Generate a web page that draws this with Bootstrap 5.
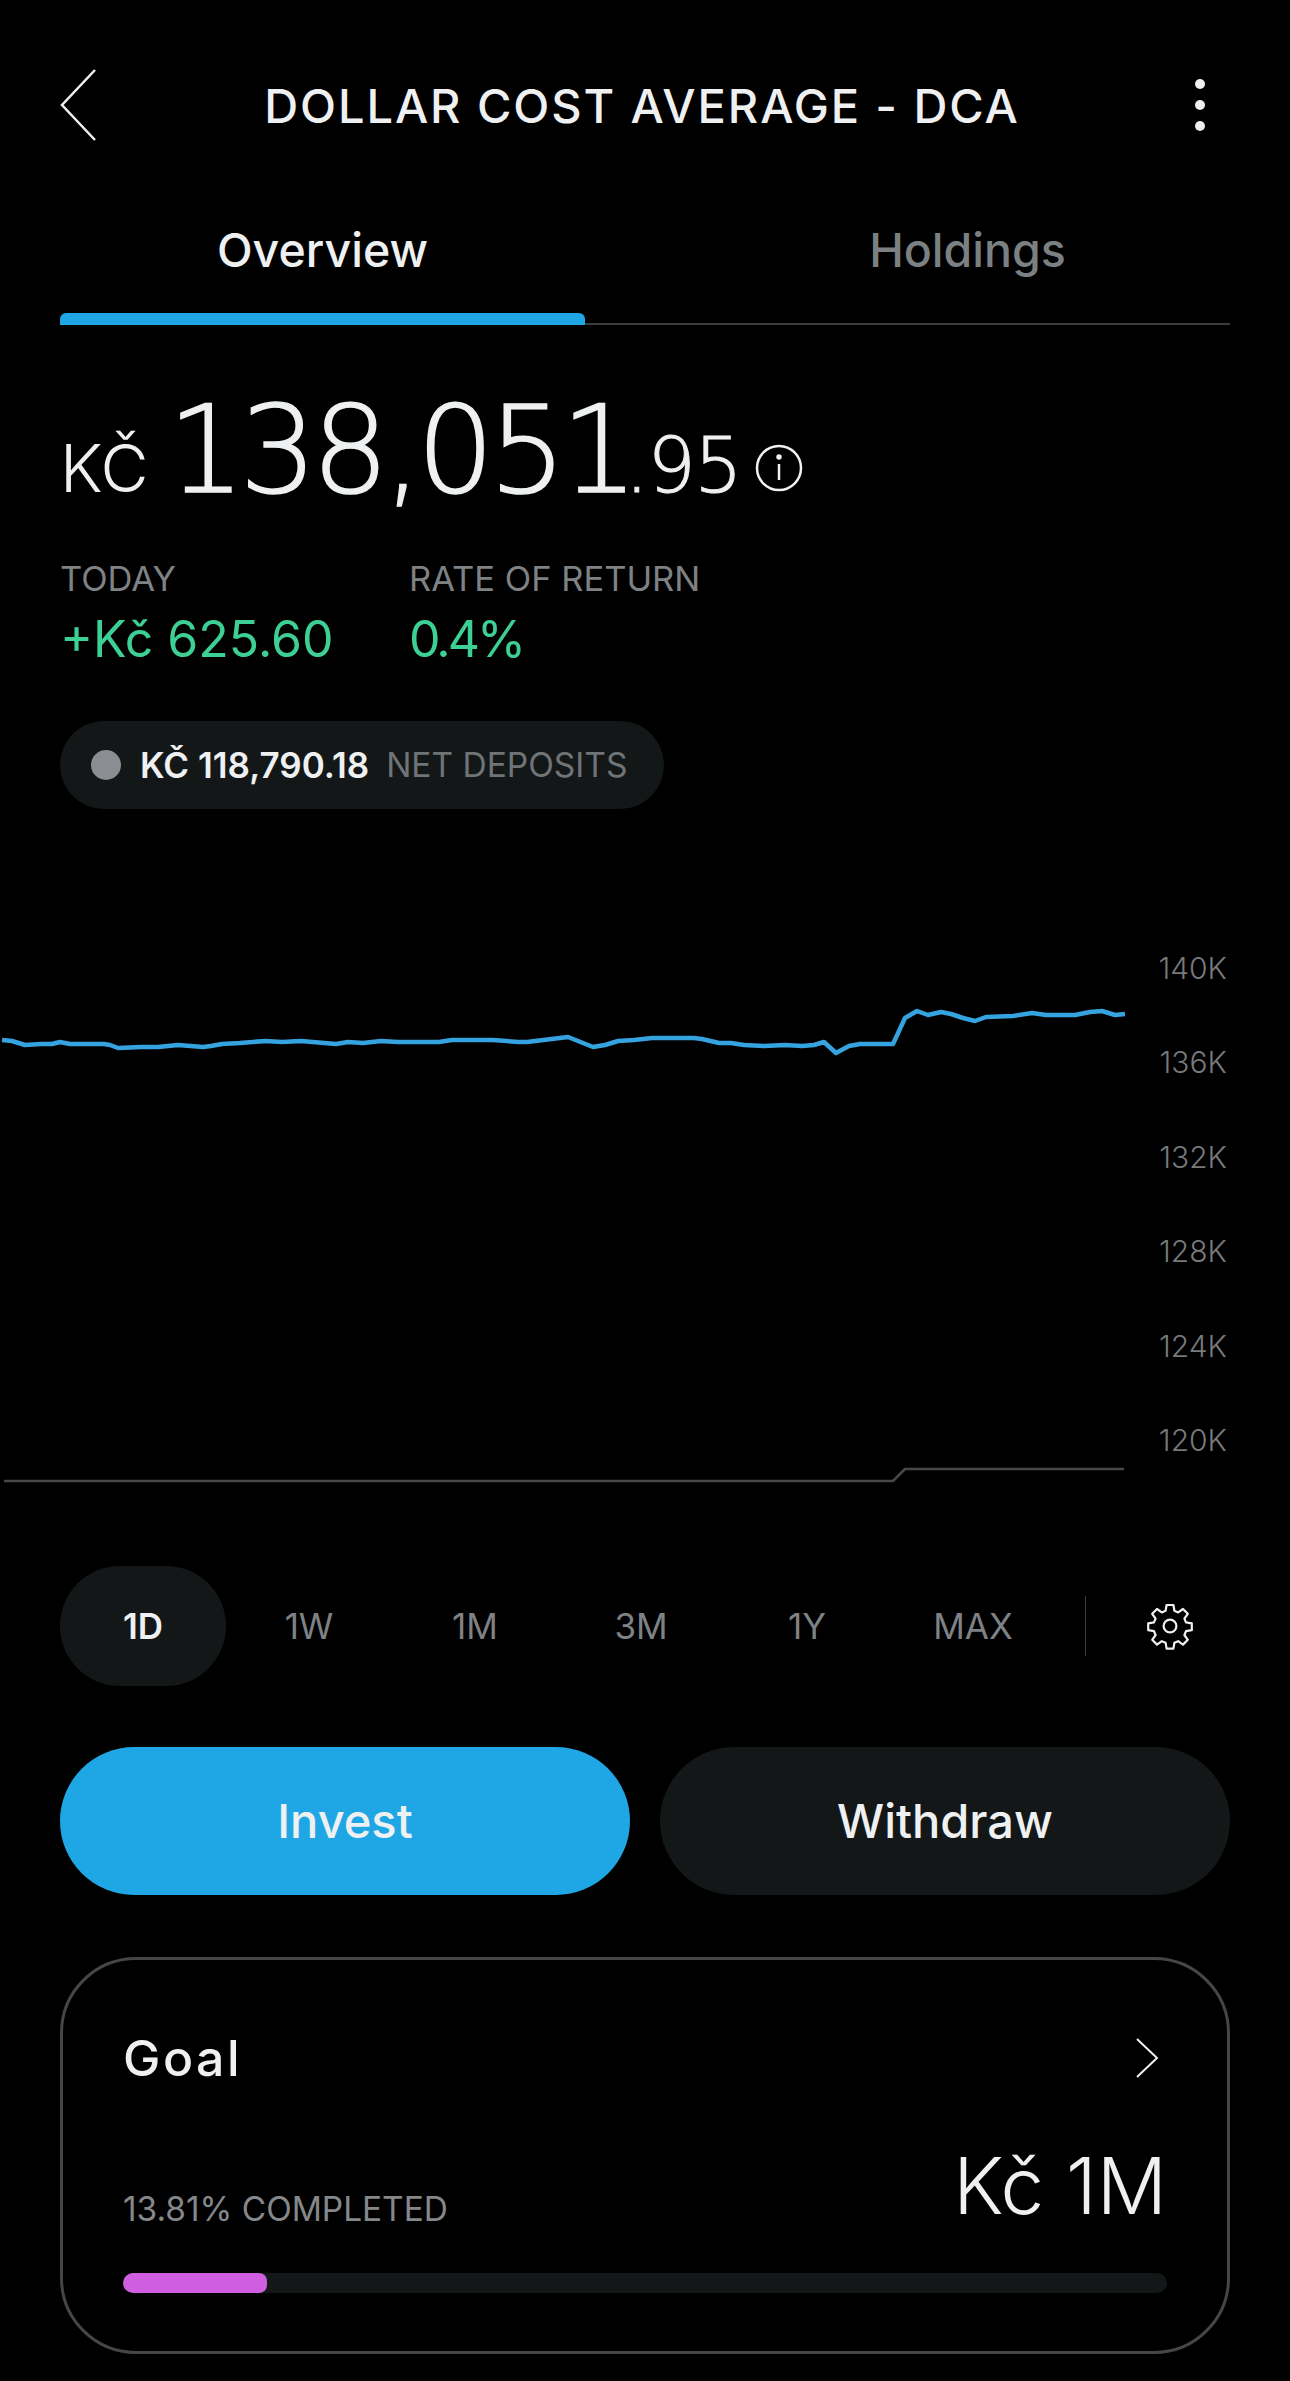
<!DOCTYPE html>
<html>
  <head>
    <title>Dollar Cost Average - DCA</title>
    <link
      rel="stylesheet"
      href="https://cdn.jsdelivr.net/npm/bootstrap@5.3.3/dist/css/bootstrap.min.css"
    />
    <script src="https://cdn.jsdelivr.net/npm/bootstrap@5.3.3/dist/js/bootstrap.bundle.min.js"></script>
    <style>
      body {
        background: #000;
        color: #eef0f1;
        font-family: "Inter", "Liberation Sans", sans-serif;
        height: 2381px;
        overflow: hidden;
      }
      .app-pad { padding: 0 60px; }
      .top-bar { height: 210px; }
      .top-title { font-size: 47px; font-weight: 500; line-height: 1; margin: 0; letter-spacing: 1.9px; }
      .top-dots { margin-right: 18px; }
      .tab-row { height: 115px; border-bottom: 2px solid #3a3c3e; }
      .tab-one { width: 525px; padding-top: 6px; font-size: 46.5px; font-weight: 500; color: #eef0f1; position: relative; }
      .tab-one::after {
        content: "";
        position: absolute;
        left: 0;
        right: 0;
        bottom: -2px;
        height: 12px;
        background: #1ea7e4;
        border-radius: 6px 6px 0 0;
      }
      .tab-two { padding-top: 6px; padding-left: 120px; font-size: 46.5px; font-weight: 500; color: #7b8082; }
      .amount-row { height: 229px; padding-top: 34px; }
      .cur-big { font-size: 66px; font-weight: 300; margin-right: 19px; }
      .num-big {
        font-size: 122px;
        font-weight: 200;
        font-family: "DejaVu Sans", sans-serif;
        letter-spacing: -5.6px;
        -webkit-text-stroke: 1.5px #eef0f1;
      }
      .num-mid {
        font-size: 76px;
        font-weight: 200;
        font-family: "DejaVu Sans", sans-serif;
        letter-spacing: -1.5px;
        margin-left: -8px;
        -webkit-text-stroke: 1px #eef0f1;
      }
      .info-mark { margin-left: 14px; }
      .stat-label { font-size: 34.5px; line-height: 50px; color: #7e8285; }
      .stat-value { font-size: 50px; line-height: 71px; color: #3ecf95; font-weight: 400; }
      .stat-tight { letter-spacing: -3px; }
      .stat-one { width: 349px; }
      .dep-pill {
        width: 604px;
        height: 88px;
        margin-top: 46px;
        background: #141718;
        border-radius: 44px;
        padding-left: 31px;
        font-size: 35px;
      }
      .dep-dot { width: 30px; height: 30px; background: #8a8d91; }
      .dep-value { font-weight: 600; color: #eef0f1; margin: 0 17px 0 19px; }
      .dep-label { color: #6f7477; font-size: 33.5px; }
      .chart-box { position: relative; height: 757px; }
      .chart-svg { position: absolute; left: 0; top: 0; }
      .axis-labels {
        position: absolute;
        right: 63px;
        top: 921px;
        text-align: right;
        font-size: 30px;
        font-weight: 300;
        line-height: 94.4px;
        color: #77797b;
      }
      .range-row { height: 120px; }
      .range-item {
        flex: none;
        width: 166px;
        height: 120px;
        font-size: 35px;
        color: #7e8285;
        border-radius: 60px;
      }
      .range-on { background: #141718; color: #eef0f1; font-weight: 600; }
      .range-line { flex: none; width: 1px; height: 60px; background: #3a3c3e; margin-left: 29px; }
      .gear-box { flex: none; padding-left: 60px; }
      .act-row { margin-top: 61px; gap: 30px; }
      .act-btn {
        flex: 1;
        height: 148px;
        border-radius: 74px;
        border: 0;
        font-size: 47px;
        font-weight: 500;
        color: #eef0f1;
      }
      .act-main, .act-main:hover { background: #1ea7e4; color: #eef0f1; }
      .act-dark, .act-dark:hover { background: #141718; color: #eef0f1; }
      .goal-card {
        margin-top: 62px;
        height: 397px;
        background: #000;
        border: 3px solid #444648;
        border-radius: 76px;
        padding: 60px 60px 0 60px;
        color: #eef0f1;
      }
      .goal-title { font-size: 50px; font-weight: 500; line-height: 76px; letter-spacing: 2.5px; }
      .goal-arrow { margin-right: 8px; }
      .goal-done { font-size: 33.4px; color: #85888a; line-height: 1; margin-bottom: -1px; }
      .goal-sum { font-size: 78px; font-weight: 300; line-height: 1; }
      .goal-foot { margin-top: 51px; }
      .goal-bar { height: 20px; margin-top: 48px; background: #141718; border-radius: 10px; }
      .goal-fill { background: #cf5fe0; border-radius: 8px; }
    </style>
  </head>

  <body>
    <main class="app-pad">
      <header class="top-bar d-flex align-items-center justify-content-between">
        <svg width="36" height="72" viewBox="0 0 36 72" fill="none" stroke="#eef0f1" stroke-width="2.5">
          <path d="M35 1 L2 36 L35 71" />
        </svg>
        <h1 class="top-title">DOLLAR COST AVERAGE - DCA</h1>
        <svg class="top-dots" width="24" height="60" viewBox="0 0 24 60" fill="#eef0f1">
          <circle cx="12" cy="9" r="5" />
          <circle cx="12" cy="30" r="5" />
          <circle cx="12" cy="51" r="5" />
        </svg>
      </header>

      <nav class="tab-row nav">
        <a class="tab-one text-center text-decoration-none" href="#">Overview</a>
        <a class="tab-two flex-fill text-center text-decoration-none" href="#">Holdings</a>
      </nav>

      <section class="amount-row d-flex align-items-baseline">
        <span class="cur-big">KČ</span>
        <span class="num-big">138,051</span>
        <span class="num-mid">.95</span>
        <svg class="info-mark" width="48" height="48" viewBox="0 0 48 48" fill="none" stroke="#eef0f1" stroke-width="2.5">
          <circle cx="24" cy="24" r="22" />
          <path d="M24 20 V36" />
          <circle cx="24" cy="13" r="1.5" fill="#eef0f1" />
        </svg>
      </section>

      <section class="d-flex">
        <div class="stat-one">
          <div class="stat-label">TODAY</div>
          <div class="stat-value">+Kč 625.60</div>
        </div>
        <div>
          <div class="stat-label">RATE OF RETURN</div>
          <div class="stat-value stat-tight">0.4%</div>
        </div>
      </section>

      <div class="dep-pill d-flex align-items-center">
        <span class="dep-dot rounded-circle"></span>
        <span class="dep-value">KČ 118,790.18</span>
        <span class="dep-label">NET DEPOSITS</span>
      </div>
    </main>

    <div class="chart-box">
      <svg class="chart-svg" width="1290" height="757" viewBox="0 808 1290 757" fill="none" stroke-linejoin="round">
        <polyline
          stroke="#35a3df"
          stroke-width="4.5"
          points="2,1039 12,1040 25,1044 41,1043 52,1043 60,1041 70,1043 104,1043 110,1044 118,1047 141,1046 158,1046 178,1044 203,1046 211,1045 222,1043 240,1042 265,1040 282,1041 301,1040 336,1043 348,1041 363,1042 381,1040 398,1041 439,1041 452,1039 493,1039 518,1041 527,1041 568,1036 593,1046 605,1044 618,1040 634,1039 652,1037 694,1037 702,1038 719,1042 731,1042 744,1044 764,1045 785,1044 802,1045 814,1044 824,1041 836,1052 849,1045 860,1043 893,1043 905,1017 917,1010 928,1014 941,1011 951,1013 963,1017 975,1020 986,1016 1013,1015 1032,1012 1046,1014 1075,1014 1090,1011 1102,1010 1115,1014 1125,1013"
        />
        <polyline stroke="#46484a" stroke-width="2.5" points="4,1480 893,1480 905,1468 1124,1468" />
      </svg>
    </div>
    <div class="axis-labels">
      <div>140K</div>
      <div>136K</div>
      <div>132K</div>
      <div>128K</div>
      <div>124K</div>
      <div>120K</div>
    </div>

    <section class="app-pad">
      <div class="range-row d-flex align-items-center">
        <div class="range-item range-on d-flex align-items-center justify-content-center">1D</div>
        <div class="range-item d-flex align-items-center justify-content-center">1W</div>
        <div class="range-item d-flex align-items-center justify-content-center">1M</div>
        <div class="range-item d-flex align-items-center justify-content-center">3M</div>
        <div class="range-item d-flex align-items-center justify-content-center">1Y</div>
        <div class="range-item d-flex align-items-center justify-content-center">MAX</div>
        <div class="range-line"></div>
        <div class="gear-box d-flex">
          <svg width="48" height="48" viewBox="0 0 24 24" fill="none" stroke="#eef0f1" stroke-width="1.1" stroke-linejoin="round">
            <circle cx="12" cy="12" r="3.2" />
            <path d="M10.3 1.5h3.4l.5 2.9 1.9.8 2.4-1.7 2.4 2.4-1.7 2.4.8 1.9 2.9.5v3.4l-2.9.5-.8 1.9 1.7 2.4-2.4 2.4-2.4-1.7-1.9.8-.5 2.9h-3.4l-.5-2.9-1.9-.8-2.4 1.7-2.4-2.4 1.7-2.4-.8-1.9-2.9-.5v-3.4l2.9-.5.8-1.9-1.7-2.4 2.4-2.4 2.4 1.7 1.9-.8z" />
          </svg>
        </div>
      </div>

      <div class="act-row d-flex">
        <button class="btn act-btn act-main" type="button">Invest</button>
        <button class="btn act-btn act-dark" type="button">Withdraw</button>
      </div>

      <div class="card goal-card">
        <div class="d-flex align-items-center justify-content-between">
          <span class="goal-title">Goal</span>
          <svg class="goal-arrow" width="24" height="40" viewBox="0 0 24 40" fill="none" stroke="#eef0f1" stroke-width="2">
            <path d="M2 1 L22 20 L2 39" />
          </svg>
        </div>
        <div class="goal-foot d-flex align-items-end justify-content-between">
          <span class="goal-done">13.81% COMPLETED</span>
          <span class="goal-sum">Kč 1M</span>
        </div>
        <div class="progress goal-bar">
          <div class="progress-bar goal-fill" style="width: 13.81%"></div>
        </div>
      </div>
    </section>
  </body>
</html>
